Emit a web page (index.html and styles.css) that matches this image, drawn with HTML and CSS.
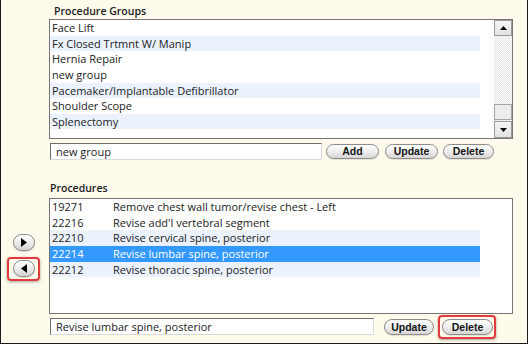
FILE: index.html
```html
<!DOCTYPE html>
<html>
<head>
<meta charset="utf-8">
<link rel="stylesheet" href="styles.css">
</head>
<body>
<div class="panel">
  <div class="side">
    <button class="arrow" aria-label="Add"><svg width="6" height="9" viewBox="0 0 6 9"><polygon points="0,0 6,4.5 0,9" fill="#000"/></svg></button>
    <button class="arrow arrow-left hl" aria-label="Remove"><svg width="6" height="9" viewBox="0 0 6 9"><polygon points="6,0 0,4.5 6,9" fill="#000"/></svg></button>
  </div>
  <div class="main">
    <div class="title">Procedure Groups</div>
    <div class="listbox groups">
      <div class="rows">
        <div class="row">Face Lift</div>
        <div class="row alt">Fx Closed Trtmnt W/ Manip</div>
        <div class="row">Hernia Repair</div>
        <div class="row">new group</div>
        <div class="row alt">Pacemaker/Implantable Defibrillator</div>
        <div class="row">Shoulder Scope</div>
        <div class="row alt">Splenectomy</div>
      </div>
      <div class="scrollbar">
        <div class="sb-btn sb-up"><svg width="7" height="4" viewBox="0 0 7 4"><polygon points="0,4 3.5,0 7,4" fill="#000"/></svg></div>
        <div class="sb-track"><div class="sb-thumb"></div></div>
        <div class="sb-btn sb-down"><svg width="7" height="4" viewBox="0 0 7 4"><polygon points="0,0 7,0 3.5,4" fill="#000"/></svg></div>
      </div>
    </div>
    <div class="editrow">
      <input class="field field-group" type="text" value="new group">
      <button class="pill btn-add">Add</button>
      <button class="pill btn-update">Update</button>
      <button class="pill btn-delete">Delete</button>
    </div>
    <div class="title title-proc">Procedures</div>
    <div class="listbox procs">
      <div class="rows">
        <div class="row"><span class="code">19271</span><span>Remove chest wall tumor/revise chest - Left</span></div>
        <div class="row"><span class="code">22216</span><span>Revise add'l vertebral segment</span></div>
        <div class="row alt"><span class="code">22210</span><span>Revise cervical spine, posterior</span></div>
        <div class="row selected"><span class="code">22214</span><span>Revise lumbar spine, posterior</span></div>
        <div class="row alt"><span class="code">22212</span><span>Revise thoracic spine, posterior</span></div>
      </div>
    </div>
    <div class="editrow editrow-bottom">
      <input class="field field-proc" type="text" value="Revise lumbar spine, posterior">
      <button class="pill btn-update2">Update</button>
      <button class="pill btn-delete2 hl">Delete</button>
    </div>
  </div>
</div>
</body>
</html>
```

FILE: styles.css
```css
html, body {
  margin: 0;
  padding: 0;
  background: #ffffff;
}

.panel {
  width: 528px;
  height: 344px;
  box-sizing: border-box;
  background: #fefbec;
  border: 1px solid #1c1c1c;
  border-top: none;
  display: flex;
  font-family: "Open Sans", "Noto Sans", sans-serif;
  color: #222;
}

.side {
  width: 48px;
  box-sizing: border-box;
  padding-top: 234px;
  padding-left: 12px;
  display: flex;
  flex-direction: column;
  align-items: flex-start;
}

.arrow {
  width: 22px;
  height: 17px;
  padding: 0;
  border: 1px solid #8a8a8a;
  border-radius: 9px;
  background: linear-gradient(#ffffff, #ededed 50%, #d2d2d2);
  display: flex;
  align-items: center;
  justify-content: center;
  box-shadow: 0 1px 1px rgba(0,0,0,0.12);
}

.arrow svg {
  display: block;
}

.arrow-left {
  margin-top: 9px;
}

.hl {
  position: relative;
}

.hl::after {
  content: "";
  position: absolute;
  border: 2px solid #e23b3d;
  border-radius: 4px;
  box-shadow: 0 1px 3px rgba(0,0,0,0.35);
  pointer-events: none;
}

.arrow-left.hl::after {
  top: -4px;
  bottom: -5px;
  left: -7px;
  right: -6px;
}

.btn-delete2.hl::after {
  top: -5px;
  bottom: -5px;
  left: -5px;
  right: -4px;
}

.main {
  width: 464px;
  padding-top: 4px;
  display: flex;
  flex-direction: column;
}

.title {
  font-size: 10.5px;
  font-weight: 600;
  line-height: 15px;
  height: 15px;
  padding-left: 5px;
  color: #1a1a1a;
}

.title-proc {
  padding-left: 1px;
  margin-top: 21px;
  margin-bottom: 2px;
}

.listbox {
  box-sizing: border-box;
  border: 1px solid #767676;
  background: #ffffff;
  display: flex;
  font-size: 11px;
}

.groups {
  height: 120px;
}

.procs {
  height: 116px;
}

.rows {
  width: 430px;
  display: flex;
  flex-direction: column;
}

.row {
  height: 15.65px;
  line-height: 15.65px;
  padding-left: 2px;
  white-space: nowrap;
  display: flex;
}

.row.alt {
  background: #ebf2fe;
}

.row.selected {
  background: #3399ff;
  color: #ffffff;
}

.code {
  width: 61px;
  flex: none;
}

.scrollbar {
  margin-left: auto;
  width: 18px;
  display: flex;
  flex-direction: column;
}

.sb-btn {
  box-sizing: border-box;
  border: 1px solid #9a9a9a;
  background: linear-gradient(#f6f6f6, #e2e2e2);
  display: flex;
  align-items: center;
  justify-content: center;
}

.sb-up {
  height: 16px;
}

.sb-down {
  height: 17px;
}

.sb-track {
  flex: 1;
  display: flex;
  flex-direction: column;
  justify-content: flex-end;
  padding-bottom: 1px;
  background: repeating-conic-gradient(#e4e4e4 0 25%, #ffffff 0 50%) 0 0 / 2px 2px;
}

.sb-thumb {
  height: 16px;
  box-sizing: border-box;
  border: 1px solid #a4a4a4;
  background: #ececec;
}

.editrow {
  margin-top: 4px;
  height: 17px;
  display: flex;
  align-items: center;
}

.field {
  box-sizing: border-box;
  height: 17px;
  margin: 0 0 0 1px;
  padding: 0 0 0 5px;
  border: 1px solid;
  border-color: #6e6e6e #dadada #dadada #6e6e6e;
  background: #ffffff;
  font-family: "Open Sans", "Noto Sans", sans-serif;
  font-size: 11px;
  color: #222;
  outline: none;
}

.field-group {
  width: 272px;
}

.field-proc {
  width: 324px;
}

.pill {
  box-sizing: border-box;
  height: 15px;
  padding: 0;
  border: 1px solid #8b8b8b;
  border-radius: 8px;
  background: linear-gradient(#ffffff, #eeeeee 50%, #d6d6d6);
  font-family: "Liberation Sans", Arial, sans-serif;
  font-weight: bold;
  font-size: 10.5px;
  line-height: 13px;
  color: #151515;
  text-align: center;
  box-shadow: 0 1px 1px rgba(0,0,0,0.1);
}

.btn-add {
  width: 53px;
  margin-left: 4px;
}

.btn-update {
  width: 53px;
  margin-left: 6px;
}

.btn-delete {
  width: 51px;
  margin-left: 5px;
}

.editrow-bottom .pill {
  height: 16px;
  line-height: 14px;
}

.btn-update2 {
  width: 50px;
  margin-left: 10px;
}

.btn-delete2 {
  width: 51px;
  margin-left: 8px;
}
```
